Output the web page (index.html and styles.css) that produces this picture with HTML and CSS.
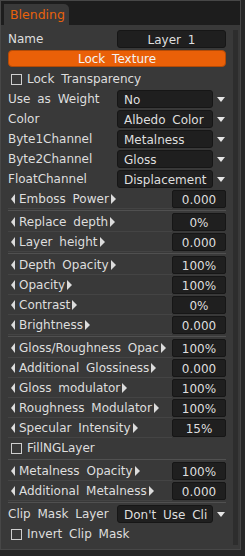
FILE: index.html
```html
<html lang="en">
    <head>
        <meta charset="UTF-8">
        <meta name="viewport" content="width=device-width, initial-scale=1.0">
        <title>Blending</title>
        <link rel="stylesheet" href="styles.css">
    </head>
    <body>
        <div class="window">
            <div class="tabbar">
                <div class="tab">Blending</div>
            </div>
            <div class="panel">
                <div class="content">
                    <div class="row">
                        <div class="label">Name</div>
                        <div class="field name">Layer 1</div>
                    </div>
                    <div class="lockbtn">Lock Texture</div>
                    <div class="row check first">
                        <span class="box"></span>Lock Transparency
                    </div>

                    <div class="row">
                        <div class="label">Use as Weight</div>
                        <div class="field drop">No</div>
                        <div class="arrow"></div>
                    </div>
                    <div class="row">
                        <div class="label">Color</div>
                        <div class="field drop">Albedo Color</div>
                        <div class="arrow"></div>
                    </div>
                    <div class="row">
                        <div class="label">Byte1Channel</div>
                        <div class="field drop">Metalness</div>
                        <div class="arrow"></div>
                    </div>
                    <div class="row">
                        <div class="label">Byte2Channel</div>
                        <div class="field drop">Gloss</div>
                        <div class="arrow"></div>
                    </div>
                    <div class="row">
                        <div class="label">FloatChannel</div>
                        <div class="field drop">Displacement</div>
                        <div class="arrow"></div>
                    </div>

                    <div class="row slider">
                        <div class="slabel"><i class="tl"></i>Emboss Power<i class="tr"></i></div>
                        <div class="value">0.000</div>
                    </div>
                    <div class="sep"></div>
                    <div class="row slider">
                        <div class="slabel"><i class="tl"></i>Replace depth<i class="tr"></i></div>
                        <div class="value">0%</div>
                    </div>
                    <div class="row slider">
                        <div class="slabel"><i class="tl"></i>Layer height<i class="tr"></i></div>
                        <div class="value">0.000</div>
                    </div>
                    <div class="sep"></div>
                    <div class="row slider">
                        <div class="slabel"><i class="tl"></i>Depth Opacity<i class="tr"></i></div>
                        <div class="value">100%</div>
                    </div>
                    <div class="row slider">
                        <div class="slabel"><i class="tl"></i>Opacity<i class="tr"></i></div>
                        <div class="value">100%</div>
                    </div>
                    <div class="row slider">
                        <div class="slabel"><i class="tl"></i>Contrast<i class="tr"></i></div>
                        <div class="value">0%</div>
                    </div>
                    <div class="row slider">
                        <div class="slabel"><i class="tl"></i>Brightness<i class="tr"></i></div>
                        <div class="value">0.000</div>
                    </div>
                    <div class="sep"></div>
                    <div class="row slider">
                        <div class="slabel"><i class="tl"></i>Gloss/Roughness Opac<i class="tr"></i></div>
                        <div class="value">100%</div>
                    </div>
                    <div class="row slider">
                        <div class="slabel"><i class="tl"></i>Additional Glossiness<i class="tr"></i></div>
                        <div class="value">0.000</div>
                    </div>
                    <div class="row slider">
                        <div class="slabel"><i class="tl"></i>Gloss modulator<i class="tr"></i></div>
                        <div class="value">100%</div>
                    </div>
                    <div class="row slider">
                        <div class="slabel"><i class="tl"></i>Roughness Modulator<i class="tr"></i></div>
                        <div class="value">100%</div>
                    </div>
                    <div class="row slider">
                        <div class="slabel"><i class="tl"></i>Specular Intensity<i class="tr"></i></div>
                        <div class="value">15%</div>
                    </div>
                    <div class="row check">
                        <span class="box"></span>FillNGLayer
                    </div>
                    <div class="sep"></div>
                    <div class="row slider">
                        <div class="slabel"><i class="tl"></i>Metalness Opacity<i class="tr"></i></div>
                        <div class="value">100%</div>
                    </div>
                    <div class="row slider">
                        <div class="slabel"><i class="tl"></i>Additional Metalness<i class="tr"></i></div>
                        <div class="value">0.000</div>
                    </div>
                    <div class="sep"></div>
                    <div class="row">
                        <div class="label">Clip Mask Layer</div>
                        <div class="field drop">Don't Use Cli</div>
                        <div class="arrow"></div>
                    </div>
                    <div class="row check">
                        <span class="box"></span>Invert Clip Mask
                    </div>
                </div>
                <div class="scrollbar"></div>
            </div>
        </div>
    </body>
</html>
```

FILE: styles.css
```css
body {
    margin: 0;
    padding: 0;
    background-color: #262626;
    font-family: 'DejaVu Sans', 'Liberation Sans', sans-serif;
    font-size: 12px;
    color: #dedede;
    word-spacing: 3px;
}
.window {
    width: 239px;
    height: 548px;
    border: 1px solid #474747;
    background-color: #393939;
    display: flex;
    flex-direction: column;
}
.tabbar {
    height: 24px;
    background-color: #1d1d1d;
    padding: 3px 0 0 3px;
    box-sizing: border-box;
    display: flex;
    align-items: flex-end;
}
.tab {
    width: 65px;
    height: 21px;
    background-color: #393939;
    border-radius: 0 5px 0 0;
    color: #e8620c;
    font-size: 12.5px;
    padding-left: 6px;
    box-sizing: border-box;
    line-height: 21px;
}
.panel {
    flex: 1;
    display: flex;
    padding: 4px 0 0 7px;
}
.content {
    width: 218px;
}
.scrollbar {
    width: 5px;
    height: 515px;
    margin-left: 7px;
    margin-top: 1px;
    background-color: #2d2d2d;
}
.row {
    height: 20px;
    display: flex;
    align-items: center;
    white-space: nowrap;
}
.label {
    width: 109px;
}
.field {
    height: 18px;
    line-height: 18px;
    background-color: #1f1f1f;
    border: 1px solid #161616;
    border-radius: 3px;
    box-sizing: border-box;
    overflow: hidden;
}
.name {
    flex: 1;
    text-align: center;
}
.drop {
    width: 96px;
    padding-left: 6px;
}
.arrow {
    width: 0;
    height: 0;
    margin-left: 4px;
    border-left: 4px solid transparent;
    border-right: 4px solid transparent;
    border-top: 5px solid #e6e6e6;
}
.lockbtn {
    height: 17px;
    line-height: 17px;
    margin-top: 1px;
    background-color: #ea6008;
    border: 1px solid #b34a06;
    border-radius: 4px;
    box-sizing: border-box;
    text-align: center;
    color: #f4f4f4;
}
.check {
    padding-left: 3px;
}
.check.first {
    margin-top: 2px;
}
.box {
    width: 11px;
    height: 11px;
    border: 1px solid #cfcfcf;
    box-sizing: border-box;
    margin-right: 5px;
}
.slider {
    align-items: stretch;
}
.slabel {
    width: 164px;
    display: flex;
    align-items: center;
    padding-left: 3px;
    box-sizing: border-box;
    border-bottom: 1px solid #444444;
    overflow: hidden;
}
.tl, .tr {
    width: 0;
    height: 0;
    border-top: 5px solid transparent;
    border-bottom: 5px solid transparent;
}
.tl {
    border-right: 4px solid #dcdcdc;
    margin-right: 4px;
}
.tr {
    border-left: 5px solid #dcdcdc;
    margin-left: 2px;
}
.value {
    width: 54px;
    height: 18px;
    line-height: 18px;
    margin-top: 1px;
    background-color: #1f1f1f;
    border: 1px solid #161616;
    border-radius: 2px;
    box-sizing: border-box;
    text-align: center;
}
.sep {
    height: 3px;
    display: flex;
    align-items: center;
}
.sep::after {
    content: '';
    display: block;
    width: 100%;
    height: 1px;
    background-color: #505050;
}
```
